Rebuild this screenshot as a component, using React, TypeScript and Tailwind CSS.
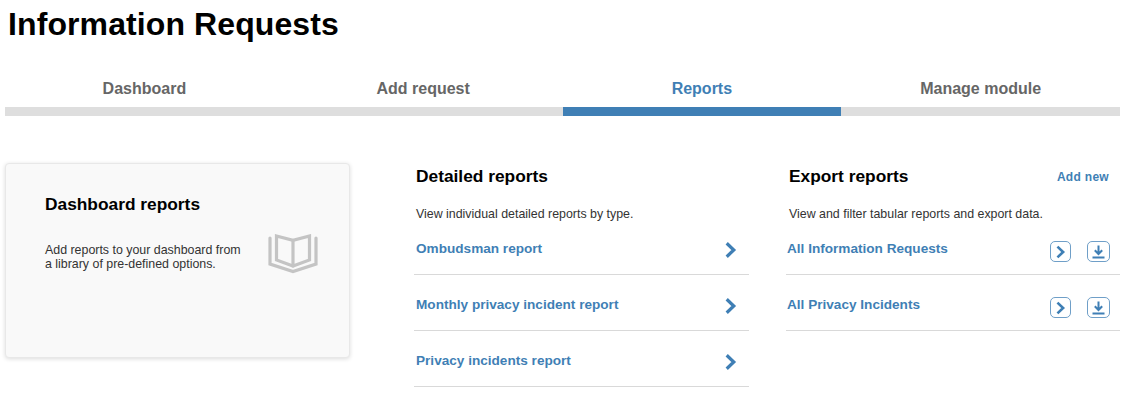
const blue = "text-[#3f7fb5]";

function Chevron({ className = "" }: { className?: string }) {
  return (
    <svg viewBox="0 0 12 16" className={className} fill="none" stroke="#3f7fb5" strokeWidth="3">
      <path d="M2.5 1.8 9 8l-6.5 6.2" />
    </svg>
  );
}

function BoxNext() {
  return (
    <span className="flex h-[21px] w-[21px] items-center justify-center rounded-[5px] border-[1.5px] border-[#6f9fc8]">
      <Chevron className="h-[14px] w-[11px]" />
    </span>
  );
}

function BoxDownload() {
  return (
    <span className="flex h-[21px] w-[23px] items-center justify-center rounded-[5px] border-[1.5px] border-[#6f9fc8]">
      <svg viewBox="0 0 15 14" className="h-[14px] w-[15px]" fill="none" stroke="#3f7fb5" strokeWidth="2">
        <path d="M7.5 0.5V8.5M3.8 5.2 7.5 9l3.7-3.8M1.5 12.6h12" />
      </svg>
    </span>
  );
}

function BookIcon() {
  return (
    <svg viewBox="0 0 50 40" className="mt-[3px] h-[40px] w-[50px]" fill="none" stroke="#c4c4c4" strokeWidth="3.2" strokeLinecap="round">
      <path d="M8.5 2 25 6.3 41.5 2V26L25 32 8.5 26Z" />
      <path d="M25 6.3V32" />
      <path d="M2 4V30L25 37.5 48 30V4" />
    </svg>
  );
}

function Row({ label, inset, children }: { label: string; inset: string; children: React.ReactNode }) {
  return (
    <div className={`flex h-[56px] border-b border-[#d9d9d9] ${inset}`}>
      <a className={`pt-[22px] text-[13.6px] font-bold leading-[15px] ${blue}`}>{label}</a>
      <div className="ml-auto">{children}</div>
    </div>
  );
}

const tabs = ["Dashboard", "Add request", "Reports", "Manage module"];

export default function App() {
  return (
    <div className="h-[405px] w-[1128px] overflow-hidden bg-white font-['Liberation_Sans',Arial,sans-serif] text-black">
      <h1 className="pl-[8px] pt-[6px] text-[32px] font-bold leading-[37px] tracking-[0.1px]">Information Requests</h1>
      <nav className="ml-[5px] mt-[32px] grid w-[1115px] grid-cols-4">
        {tabs.map((t) => (
          <div
            key={t}
            className={`h-[41px] border-b-[9px] pt-[5px] text-center text-[16px] font-bold leading-[18px] ${
              t === "Reports" ? "border-[#3f7fb5] text-[#3f7fb5]" : "border-[#dedede] text-[#666666]"
            }`}
          >
            {t}
          </div>
        ))}
      </nav>
      <main className="ml-[5px] mt-[47px] flex w-[1115px] items-start">
        <section className="mr-[64px] flex h-[195px] w-[345px] flex-col rounded-[4px] border border-[#e8e8e8] bg-[#f9f9f9] pl-[39px] pr-[31px] pt-[30px] shadow-[0_1px_4px_rgba(0,0,0,0.14)]">
          <h2 className="text-[17.33px] font-bold leading-[21px]">Dashboard reports</h2>
          <div className="mt-[16px] flex items-start justify-between">
            <p className="mt-[12px] text-[12.4px] leading-[14px] text-[#333333]">
              Add reports to your dashboard from
              <br />a library of pre-defined options.
            </p>
            <BookIcon />
          </div>
        </section>
        <section className="mr-[37px] w-[335px]">
          <div className="pl-[2px]">
            <h2 className="pt-[3px] text-[17.33px] font-bold leading-[21px]">Detailed reports</h2>
            <p className="mt-[20px] text-[12.4px] leading-[14px] text-[#333333]">View individual detailed reports by type.</p>
          </div>
          <div className="mt-[-2px]">
            {["Ombudsman report", "Monthly privacy incident report", "Privacy incidents report"].map((r) => (
              <Row key={r} label={r} inset="pl-[2px]">
                <div className="pr-[12px] pt-[22px]">
                  <Chevron className="h-[18px] w-[13px]" />
                </div>
              </Row>
            ))}
          </div>
        </section>
        <section className="w-[334px]">
          <div className="flex items-start pl-[3px]">
            <h2 className="pt-[3px] text-[17.33px] font-bold leading-[21px]">Export reports</h2>
            <a className={`ml-auto pr-[11px] pt-[7px] text-[12px] font-bold leading-[14px] tracking-[0.3px] ${blue}`}>Add new</a>
          </div>
          <p className="mt-[20px] pl-[3px] text-[12.4px] leading-[14px] text-[#333333]">View and filter tabular reports and export data.</p>
          <div className="mt-[-2px]">
            {["All Information Requests", "All Privacy Incidents"].map((r) => (
              <Row key={r} label={r} inset="pl-[1px]">
                <div className="flex gap-[16px] pr-[10px] pt-[22px]">
                  <BoxNext />
                  <BoxDownload />
                </div>
              </Row>
            ))}
          </div>
        </section>
      </main>
    </div>
  );
}
